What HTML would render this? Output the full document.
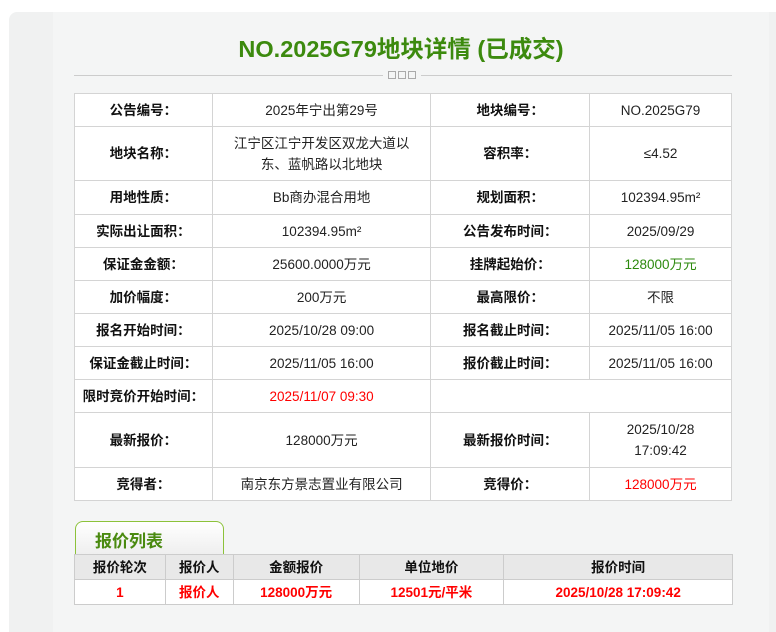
<!DOCTYPE html>
<html><head><meta charset="utf-8"><style>
*{margin:0;padding:0;box-sizing:border-box}
body{width:776px;height:616px;background:#fff;font-family:"Liberation Sans","Noto Sans CJK SC",sans-serif;overflow:hidden;position:relative}
.outer{position:absolute;left:9px;top:12px;width:780px;height:620px;background:#f0f1f1;border-radius:8px 0 0 0}
.inner{position:absolute;left:53px;top:12px;width:716px;height:620px;background:#f4f5f5}
h1{position:absolute;left:0;width:802px;top:30px;text-align:center;font-size:23.5px;color:#3c8a0e;font-weight:bold}
.line{position:absolute;left:74px;width:658px;top:75px;height:1px;background:#ccc}
.dots{position:absolute;left:383px;top:70px;width:38px;height:11px;background:#f4f5f5;text-align:center;font-size:0}
.dots i{display:inline-block;width:8px;height:8px;border:1px solid #aaa;margin:1px 1px;background:#f4f5f5}
table{border-collapse:collapse;position:absolute;background:#fff}
td{border:1px solid #d4d4d4;text-align:center;font-size:13.5px;color:#222;line-height:21px}
.m td.l{font-weight:bold;color:#111}
.g{color:#2d8a0e}.r{color:#f00}
.tab{position:absolute;left:75px;top:521px;width:149px;height:34px;border:1px solid #8cc23a;border-bottom:none;border-radius:8px 8px 0 0;background:linear-gradient(#fff,#eee);font-size:17px;font-weight:bold;color:#4a8a10;padding:5px 0 0 19px}
.b td{font-weight:bold;border-color:#ccc}
.b tr.h td{background:#e8e8e8;color:#111}
.b tr.d td{color:#f00}
</style></head><body>
<div class="outer"></div><div class="inner"></div>
<h1>NO.2025G79地块详情 (已成交)</h1>
<div class="line"></div><div class="dots"><i></i><i></i><i></i></div>
<table class="m" style="left:74px;top:93px;width:658px">
<colgroup><col style="width:138px"><col style="width:219px"><col style="width:159px"><col style="width:142px"></colgroup>
<tr style="height:33px"><td class="l">公告编号：</td><td>2025年宁出第29号</td><td class="l">地块编号：</td><td>NO.2025G79</td></tr>
<tr style="height:54px"><td class="l">地块名称：</td><td>江宁区江宁开发区双龙大道以<br>东、蓝帆路以北地块</td><td class="l">容积率：</td><td>≤4.52</td></tr>
<tr style="height:34px"><td class="l">用地性质：</td><td>Bb商办混合用地</td><td class="l">规划面积：</td><td>102394.95m²</td></tr>
<tr style="height:33px"><td class="l">实际出让面积：</td><td>102394.95m²</td><td class="l">公告发布时间：</td><td>2025/09/29</td></tr>
<tr style="height:33px"><td class="l">保证金金额：</td><td>25600.0000万元</td><td class="l">挂牌起始价：</td><td class="g">128000万元</td></tr>
<tr style="height:33px"><td class="l">加价幅度：</td><td>200万元</td><td class="l">最高限价：</td><td>不限</td></tr>
<tr style="height:33px"><td class="l">报名开始时间：</td><td>2025/10/28 09:00</td><td class="l">报名截止时间：</td><td>2025/11/05 16:00</td></tr>
<tr style="height:33px"><td class="l">保证金截止时间：</td><td>2025/11/05 16:00</td><td class="l">报价截止时间：</td><td>2025/11/05 16:00</td></tr>
<tr style="height:33px"><td class="l">限时竞价开始时间：</td><td class="r">2025/11/07 09:30</td><td colspan="2"></td></tr>
<tr style="height:55px"><td class="l">最新报价：</td><td>128000万元</td><td class="l">最新报价时间：</td><td>2025/10/28<br>17:09:42</td></tr>
<tr style="height:33px"><td class="l">竞得者：</td><td>南京东方景志置业有限公司</td><td class="l">竞得价：</td><td class="r">128000万元</td></tr>
</table>
<div class="tab">报价列表</div>
<table class="b" style="left:74px;top:554px;width:659px">
<colgroup><col style="width:91px"><col style="width:68px"><col style="width:126px"><col style="width:145px"><col style="width:229px"></colgroup>
<tr class="h" style="height:25px"><td>报价轮次</td><td>报价人</td><td>金额报价</td><td>单位地价</td><td>报价时间</td></tr>
<tr class="d" style="height:25px"><td>1</td><td>报价人</td><td>128000万元</td><td>12501元/平米</td><td>2025/10/28 17:09:42</td></tr>
</table>
</body></html>
